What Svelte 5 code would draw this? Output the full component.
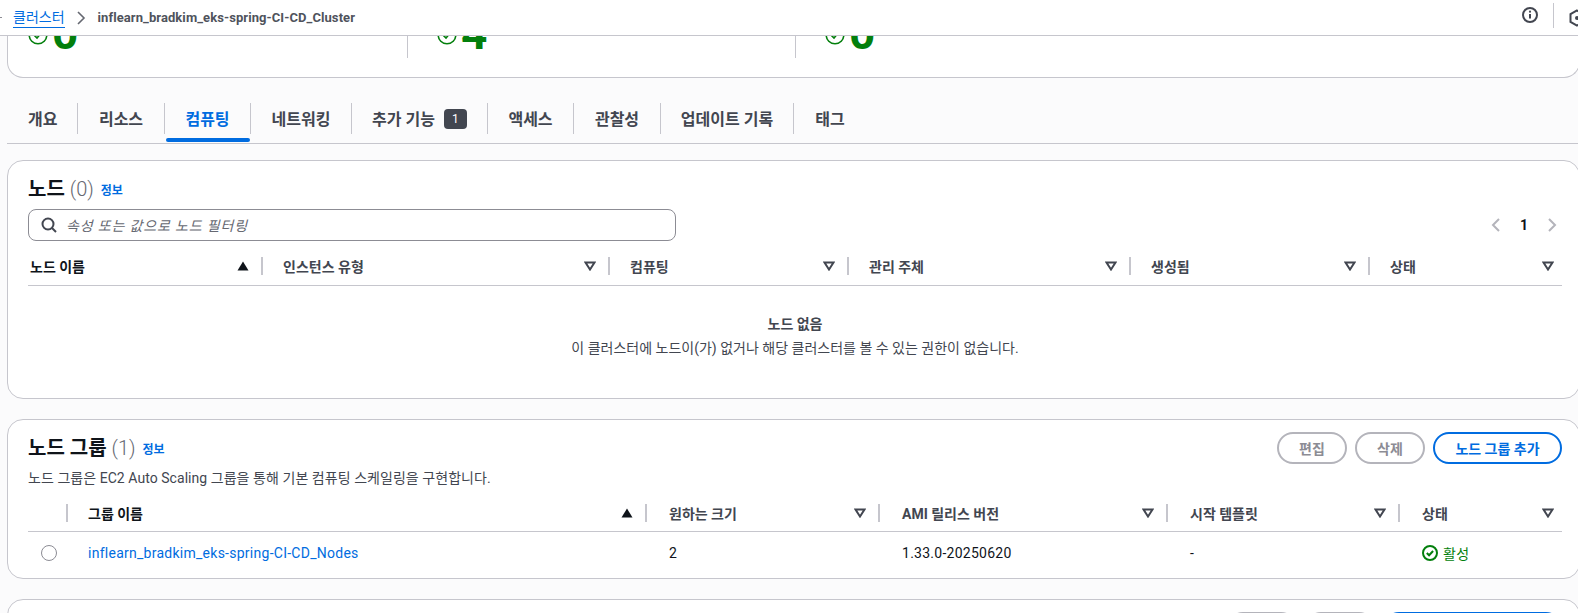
<script>
  const tabs = [
    { label: '개요', w: 71 },
    { label: '리소스', w: 87 },
    { label: '컴퓨팅', w: 86, active: true },
    { label: '네트워킹', w: 101 },
    { label: '추가 기능', w: 136, badge: 1 },
    { label: '액세스', w: 86 },
    { label: '관찰성', w: 87 },
    { label: '업데이트 기록', w: 133 },
    { label: '태그', w: 72 },
  ];

  const nodeCols = [
    { label: '노드 이름', w: 235, sorted: true },
    { label: '인스턴스 유형', w: 347 },
    { label: '컴퓨팅', w: 239 },
    { label: '관리 주체', w: 282 },
    { label: '생성됨', w: 239 },
    { label: '상태', w: 192 },
  ];

  const groupCols = [
    { label: '그룹 이름', w: 579, sorted: true },
    { label: '원하는 크기', w: 233 },
    { label: 'AMI 릴리스 버전', w: 288 },
    { label: '시작 템플릿', w: 232 },
    { label: '상태', w: 162 },
  ];

  const stats = [0, 4, 0];
</script>

<header class="topbar">
  <span class="dash"></span>
  <a class="crumb">클러스터</a>
  <svg class="crumb-sep" width="12" height="16" viewBox="0 0 12 16"><path d="M3 2l6 6-6 6" fill="none" stroke="#656871" stroke-width="1.6"/></svg>
  <span class="crumb-current">inflearn_bradkim_eks-spring-CI-CD_Cluster</span>
  <span class="spacer"></span>
  <svg class="info" width="16" height="16" viewBox="0 0 16 16">
    <circle cx="8" cy="8" r="7" fill="none" stroke="#424650" stroke-width="2"/>
    <path d="M8 7v4.5" stroke="#424650" stroke-width="2"/>
    <circle cx="8" cy="4.7" r="1.1" fill="#424650"/>
  </svg>
  <span class="top-div"></span>
  <svg class="gear" width="18" height="18" viewBox="0 0 18 18">
    <path d="M9 1.5l6.5 3.7v7.6L9 16.5l-6.5-3.7V5.2z" fill="none" stroke="#424650" stroke-width="2"/>
    <circle cx="9" cy="9" r="2" fill="#424650"/>
  </svg>
</header>

<main class="page">
  <section class="stats">
    {#each stats as n}
      <div class="stat">
        <svg width="20" height="20" viewBox="0 0 20 20"><circle cx="10" cy="10" r="8.8" fill="none" stroke="#037f0c" stroke-width="1.6"/><path d="M6 10l3 3 5-6" fill="none" stroke="#037f0c" stroke-width="1.6"/></svg>
        <b>{n}</b>
      </div>
    {/each}
  </section>

  <nav class="tabs">
    {#each tabs as t, i}
      <div class="tab" class:active={t.active} class:first={i === 0} style="width: {t.w}px">
        <span>{t.label}</span>
        {#if t.badge}<span class="badge">{t.badge}</span>{/if}
      </div>
    {/each}
  </nav>

  <section class="card nodes">
    <h2>노드 <span class="count">(0)</span> <a class="info-link">정보</a></h2>
    <div class="tools">
      <div class="filter">
        <svg width="16" height="16" viewBox="0 0 16 16"><circle cx="7" cy="7" r="5.5" fill="none" stroke="#424650" stroke-width="2"/><path d="M11 11l4 4" stroke="#424650" stroke-width="2"/></svg>
        <span>속성 또는 값으로 노드 필터링</span>
      </div>
      <div class="pager">
        <svg width="10" height="16" viewBox="0 0 10 16"><path d="M8 2L2 8l6 6" fill="none" stroke="#b4b4bb" stroke-width="2"/></svg>
        <b>1</b>
        <svg width="10" height="16" viewBox="0 0 10 16"><path d="M2 2l6 6-6 6" fill="none" stroke="#b4b4bb" stroke-width="2"/></svg>
      </div>
    </div>
    <div class="thead">
      {#each nodeCols as c, i}
        <div class="th" class:sorted={c.sorted} class:last={i === nodeCols.length - 1} style="width: {c.w}px">
          <span>{c.label}</span>
          {#if c.sorted}
            <svg width="12" height="10" viewBox="0 0 12 10"><path d="M6 0.5l5.5 9H0.5z" fill="#0f141a"/></svg>
          {:else}
            <svg width="12" height="10" viewBox="0 0 12 10"><path d="M1.5 1.5h9L6 8.5z" fill="none" stroke="#424650" stroke-width="2"/></svg>
          {/if}
        </div>
      {/each}
    </div>
    <div class="empty">
      <strong>노드 없음</strong>
      <p>이 클러스터에 노드이(가) 없거나 해당 클러스터를 볼 수 있는 권한이 없습니다.</p>
    </div>
  </section>

  <section class="card groups">
    <div class="group-head">
      <div>
        <h2>노드 그룹 <span class="count">(1)</span> <a class="info-link">정보</a></h2>
        <p class="desc">노드 그룹은 EC2 Auto Scaling 그룹을 통해 기본 컴퓨팅 스케일링을 구현합니다.</p>
      </div>
      <div class="actions">
        <button class="btn off">편집</button>
        <button class="btn off">삭제</button>
        <button class="btn line">노드 그룹 추가</button>
      </div>
    </div>
    <div class="thead group">
      <div class="th-radio"></div>
      {#each groupCols as c, i}
        <div class="th" class:sorted={c.sorted} class:last={i === groupCols.length - 1} style="width: {c.w}px">
          <span>{c.label}</span>
          {#if c.sorted}
            <svg width="12" height="10" viewBox="0 0 12 10"><path d="M6 0.5l5.5 9H0.5z" fill="#0f141a"/></svg>
          {:else}
            <svg width="12" height="10" viewBox="0 0 12 10"><path d="M1.5 1.5h9L6 8.5z" fill="none" stroke="#424650" stroke-width="2"/></svg>
          {/if}
        </div>
      {/each}
    </div>
    <div class="row">
      <div class="td-radio"><span class="radio"></span></div>
      <div class="td first" style="width: {groupCols[0].w}px"><a>inflearn_bradkim_eks-spring-CI-CD_Nodes</a></div>
      <div class="td" style="width: {groupCols[1].w}px">2</div>
      <div class="td" style="width: {groupCols[2].w}px">1.33.0-20250620</div>
      <div class="td" style="width: {groupCols[3].w}px">-</div>
      <div class="td status">
        <svg width="16" height="16" viewBox="0 0 16 16"><circle cx="8" cy="8" r="7" fill="none" stroke="#037f0c" stroke-width="2"/><path d="M4.8 8l2.3 2.3 4-4.3" fill="none" stroke="#037f0c" stroke-width="2"/></svg>
        <span>활성</span>
      </div>
    </div>
  </section>

  <section class="card next">
    <div class="next-actions">
      <span class="btn off"></span>
      <span class="btn off"></span>
      <span class="btn fill"></span>
    </div>
  </section>
</main>

<style>
  :global(body) {
    margin: 0;
    height: 613px;
    overflow: hidden;
    background: #fbfbfc;
    font-family: Roboto, "Noto Sans CJK KR", sans-serif;
    font-size: 14px;
    color: #0f141a;
  }

  .topbar {
    height: 35px;
    background: #fff;
    border-bottom: 1px solid #c6c6cd;
    display: flex;
    align-items: center;
    white-space: nowrap;
    overflow: hidden;
  }
  .dash { width: 2px; height: 1px; background: #8c8c94; margin-right: 11px; }
  .crumb { color: #006ce0; border-bottom: 1px solid #006ce0; line-height: 19px; }
  .crumb-sep { margin: 0 11px 0 10px; }
  .crumb-current { color: #4f535c; font-weight: 700; font-size: 13px; letter-spacing: 0.08px; }
  .spacer { flex: 1; }
  .info { margin-top: -6px; }
  .top-div { width: 1px; height: 25px; background: #c6c6cd; margin: -5px 14px 0 15px; }
  .gear { flex: none; margin-right: -8px; }

  .page { padding-left: 7px; margin-right: -2px; }

  .stats {
    height: 42px;
    box-sizing: border-box;
    background: #fff;
    border: 1px solid #c6c6cd;
    border-top: 0;
    border-radius: 0 0 16px 16px;
    display: flex;
    overflow: hidden;
  }
  .stat {
    width: 388px;
    height: 22px;
    padding-left: 29px;
    display: flex;
    gap: 4px;
    box-sizing: border-box;
    border-right: 1px solid #c6c6cd;
  }
  .stat:first-child { width: 400px; padding-left: 20px; }
  .stat:last-child { border-right: 0; }
  .stat svg { margin-top: -11px; flex: none; }
  .stat b { font-size: 46px; line-height: 42px; margin-top: -24px; color: #037f0c; font-weight: 700; }

  .tabs {
    display: flex;
    height: 66px;
    border-bottom: 1px solid #c6c6cd;
    box-sizing: border-box;
    padding-top: 25px;
    margin-right: 2px;
  }
  .tab {
    position: relative;
    height: 31px;
    display: flex;
    align-items: center;
    justify-content: center;
    gap: 9px;
    font-size: 16px;
    font-weight: 700;
    color: #424650;
    border-right: 1px solid #c6c6cd;
    box-sizing: border-box;
  }
  .tab span:first-child { margin-top: -2px; }
  .tab:last-child { border-right: 0; }
  .tab.first { justify-content: flex-start; padding-left: 21px; }
  .tab.active { color: #006ce0; }
  .tab.active::after {
    content: "";
    position: absolute;
    left: 1px;
    right: 0;
    bottom: -8px;
    height: 4px;
    border-radius: 2px;
    background: #006ce0;
  }
  .badge {
    width: 23px;
    height: 20px;
    border-radius: 4px;
    background: #424650;
    color: #fff;
    font-size: 12px;
    font-weight: 400;
    display: flex;
    align-items: center;
    justify-content: center;
  }

  .card {
    background: #fff;
    border: 1px solid #c6c6cd;
    border-radius: 16px;
    box-sizing: border-box;
    padding: 0 17px 0 20px;
  }
  .nodes { height: 239px; margin-top: 16px; padding-top: 15px; }
  .groups { height: 160px; margin-top: 20px; padding-top: 15px; }
  .next { height: 60px; margin-top: 20px; }

  h2 {
    margin: 0;
    font-size: 20px;
    line-height: 27px;
    font-weight: 700;
    color: #0f141a;
  }
  .count { font-weight: 300; color: #656871; font-size: 20px; }
  .info-link { font-size: 12px; font-weight: 700; color: #006ce0; margin-left: 2px; vertical-align: 1px; }

  .tools { display: flex; justify-content: space-between; align-items: center; margin-top: 4px; }
  .filter {
    width: 648px;
    height: 32px;
    border: 1px solid #8c8c94;
    border-radius: 8px;
    box-sizing: border-box;
    display: flex;
    align-items: center;
    gap: 9px;
    padding-left: 12px;
    color: #656871;
    font-style: italic;
    letter-spacing: 0.85px;
  }
  .pager { display: flex; align-items: center; margin-right: 5px; width: 66px; justify-content: space-between; }
  .pager b { font-size: 14px; }

  .thead {
    display: flex;
    height: 45px;
    border-bottom: 1px solid #c6c6cd;
    align-items: center;
    padding-top: 5px;
    box-sizing: border-box;
  }
  .thead.group { height: 38px; margin-top: 6px; padding-top: 0; }
  .th-radio { width: 38px; height: 18px; border-right: 2px solid #c6c6cd; flex: none; }
  .th {
    display: flex;
    align-items: center;
    justify-content: space-between;
    flex: none;
    height: 18px;
    box-sizing: border-box;
    padding-left: 20px;
    padding-right: 12px;
    border-right: 2px solid #c6c6cd;
    font-weight: 700;
    color: #424650;
  }
  .th.sorted { color: #0f141a; }
  .thead:not(.group) .th:first-child { padding-left: 2px; }
  .thead.group .th:not(.sorted) { padding-left: 22px; }
  .th.last { border-right: 0; padding-right: 8px; }

  .empty { text-align: center; padding-top: 26px; color: #424650; line-height: 24px; }
  .empty strong { display: block; font-weight: 700; }
  .empty p { margin: 0; }

  .group-head { display: flex; justify-content: space-between; }
  .desc { margin: 4px 0 0; font-size: 14px; color: #424650; line-height: 20px; letter-spacing: 0.05px; }
  .actions { display: flex; gap: 8px; margin-top: -3px; }
  .btn {
    display: block;
    height: 32px;
    border-radius: 20px;
    border: 2px solid #b4b4bb;
    background: #fff;
    font: inherit;
    font-weight: 700;
    color: #8c8c94;
    width: 70px;
    padding: 0;
    box-sizing: border-box;
  }
  .btn.line { width: 129px; border-color: #006ce0; color: #006ce0; }
  .btn.fill { background: #006ce0; border-color: #006ce0; width: 179px; }
  .next-actions { display: flex; justify-content: flex-end; gap: 8px; margin-top: 12px; }

  .row { display: flex; align-items: center; height: 41px; }
  .td-radio { width: 40px; flex: none; }
  .radio {
    display: block;
    width: 14px;
    height: 14px;
    border: 1px solid #8c8c94;
    border-radius: 50%;
    margin-left: 13px;
  }
  .td { flex: none; box-sizing: border-box; padding-left: 22px; color: #0f141a; letter-spacing: 0.26px; }
  .td.first { padding-left: 20px; }
  .td a { color: #006ce0; }
  .status { display: flex; align-items: center; gap: 5px; color: #037f0c; }
</style>
